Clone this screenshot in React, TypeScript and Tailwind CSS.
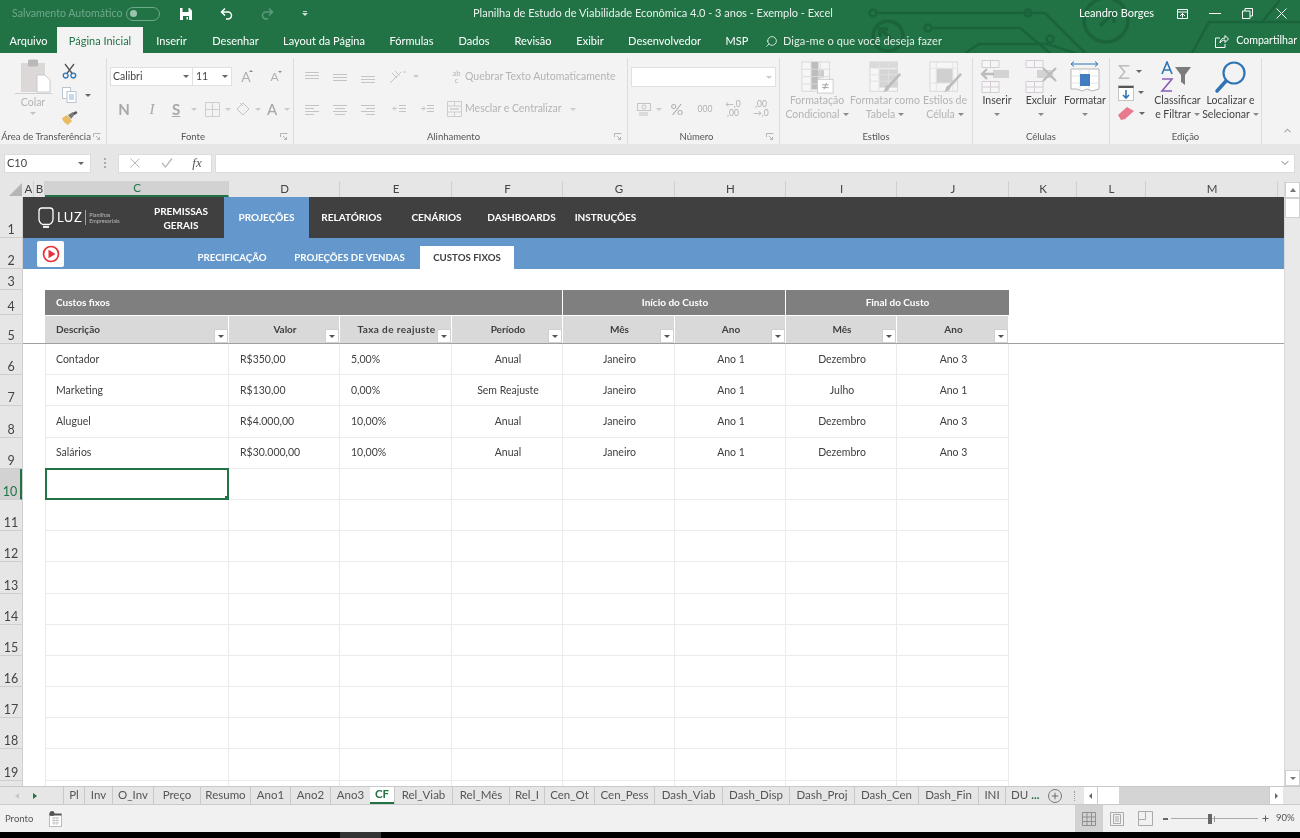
import type { ReactNode } from 'react'
import { ChevronDown, ChevronUp, Plus, Search } from 'lucide-react'

const columns = [
  { name: 'A', w: 'w-[11px]' },
  { name: 'B', w: 'w-[11px]' },
  { name: 'C', w: 'w-[184px]' },
  { name: 'D', w: 'w-[111px]' },
  { name: 'E', w: 'w-[112px]' },
  { name: 'F', w: 'w-[111px]' },
  { name: 'G', w: 'w-[112px]' },
  { name: 'H', w: 'w-[111px]' },
  { name: 'I', w: 'w-[111px]' },
  { name: 'J', w: 'w-[112px]' },
  { name: 'K', w: 'w-[68px]' },
  { name: 'L', w: 'w-[69px]' },
  { name: 'M', w: 'w-[132px]' },
]

const rowHeads = [
  { n: 1, h: 'h-[41px]' },
  { n: 2, h: 'h-[31px]' },
  { n: 3, h: 'h-[21px]' },
  { n: 4, h: 'h-[25px]' },
  { n: 5, h: 'h-[29px]' },
  ...[6, 7, 8, 9, 10, 11, 12, 13, 14, 15, 16, 17, 18, 19].map((n) => ({ n, h: 'h-[31.2px]' })),
]

const dataCols = ['w-[184px]', 'w-[111px]', 'w-[112px]', 'w-[111px]', 'w-[112px]', 'w-[111px]', 'w-[111px]', 'w-[112px]']

const headers = [
  { t: 'Descrição', align: 'pl-[11px] text-left' },
  { t: 'Valor', align: 'pl-[2px] text-center' },
  { t: 'Taxa de reajuste', align: 'pl-[2px] text-center tracking-[0.4px]' },
  { t: 'Período', align: 'pl-[2px] text-center' },
  { t: 'Mês', align: 'pl-[2px] text-center' },
  { t: 'Ano', align: 'pl-[2px] text-center' },
  { t: 'Mês', align: 'pl-[2px] text-center' },
  { t: 'Ano', align: 'pl-[2px] text-center' },
]

const costs = [
  ['Contador', 'R$350,00', '5,00%', 'Anual', 'Janeiro', 'Ano 1', 'Dezembro', 'Ano 3'],
  ['Marketing', 'R$130,00', '0,00%', 'Sem Reajuste', 'Janeiro', 'Ano 1', 'Julho', 'Ano 1'],
  ['Aluguel', 'R$4.000,00', '10,00%', 'Anual', 'Janeiro', 'Ano 1', 'Dezembro', 'Ano 3'],
  ['Salários', 'R$30.000,00', '10,00%', 'Anual', 'Janeiro', 'Ano 1', 'Dezembro', 'Ano 3'],
]

const tabs = [
  { t: 'Pl', w: 'w-[21px]' },
  { t: 'Inv', w: 'w-[28px]' },
  { t: 'O_Inv', w: 'w-[41px]' },
  { t: 'Preço', w: 'w-[47px]' },
  { t: 'Resumo', w: 'w-[50px]' },
  { t: 'Ano1', w: 'w-[40px]' },
  { t: 'Ano2', w: 'w-[40px]' },
  { t: 'Ano3', w: 'w-[40px]' },
  { t: 'CF', w: 'w-[24px]' },
  { t: 'Rel_Viab', w: 'w-[58px]' },
  { t: 'Rel_Mês', w: 'w-[57px]' },
  { t: 'Rel_I', w: 'w-[35px]' },
  { t: 'Cen_Ot', w: 'w-[50px]' },
  { t: 'Cen_Pess', w: 'w-[60px]' },
  { t: 'Dash_Viab', w: 'w-[68px]' },
  { t: 'Dash_Disp', w: 'w-[67px]' },
  { t: 'Dash_Proj', w: 'w-[65px]' },
  { t: 'Dash_Cen', w: 'w-[64px]' },
  { t: 'Dash_Fin', w: 'w-[60px]' },
  { t: 'INI', w: 'w-[27px]' },
]

const menu = [
  { t: 'Arquivo', w: 'w-[57px]' },
  { t: 'Página Inicial', w: 'w-[86px]', active: true },
  { t: 'Inserir', w: 'w-[57px]' },
  { t: 'Desenhar', w: 'w-[71px]' },
  { t: 'Layout da Página', w: 'w-[106px]' },
  { t: 'Fórmulas', w: 'w-[69px]' },
  { t: 'Dados', w: 'w-[56px]' },
  { t: 'Revisão', w: 'w-[62px]' },
  { t: 'Exibir', w: 'w-[52px]' },
  { t: 'Desenvolvedor', w: 'w-[97px]' },
  { t: 'MSP', w: 'w-[48px]' },
]

function Caret({ className = 'border-t-[#8a8a8a]' }: { className?: string }) {
  return <span className={`inline-block w-0 h-0 border-x-[3px] border-x-transparent border-t-[3px] ${className}`} />
}

function Launcher() {
  return (
    <svg width="8" height="8" viewBox="0 0 8 8" className="shrink-0" fill="none" stroke="#b5b5b5">
      <path d="M.5 4V.5H7.5" />
      <path d="M3 3l3.5 3.5M4 6.5h2.5V4" />
    </svg>
  )
}

function Group({ className, label, launcher, children }: { className: string; label: string; launcher?: boolean; children: ReactNode }) {
  return (
    <div className={`${className} h-[86px] mt-[5px] flex flex-col border-r border-[#dcdcdc] shrink-0`}>
      <div className="h-[71px] flex">{children}</div>
      <div className="h-[15px] flex items-center text-[9.5px] text-[#555] leading-none">
        <span className="flex-1 text-center whitespace-nowrap">{label}</span>
        {launcher && <span className="pr-[5px] pl-px flex"><Launcher /></span>}
      </div>
    </div>
  )
}

function Cell({ w, children }: { w: string; children: ReactNode }) {
  return <span className={`${w} h-full flex items-center justify-center shrink-0`}>{children}</span>
}

function Lines({ rows }: { rows: string[] }) {
  return (
    <svg width="14" height="12" viewBox="0 0 14 12" stroke="#c4c4c4" fill="none">
      {rows.map((d) => <path key={d} d={d} />)}
    </svg>
  )
}

function ClipboardIcon() {
  return (
    <svg width="32" height="35" viewBox="0 0 32 35" className="overflow-visible">
      <rect x="1" y="4" width="24" height="29" fill="#dcd8d8" />
      <rect x="8" y="0.5" width="10" height="7" rx="1.5" fill="#b9b9b9" />
      <path d="M17 16h8l5 5v12H17z" fill="#fff" stroke="#c9c9c9" />
      <path d="M-5 34.5h37" stroke="#cfcfcf" />
    </svg>
  )
}

function ScissorsIcon() {
  return (
    <svg width="15" height="16" viewBox="0 0 15 16" fill="none">
      <path d="M3 1l7.5 10M12 1L4.5 11" stroke="#555" strokeWidth="1.3" />
      <circle cx="3.7" cy="12.6" r="2.4" stroke="#2f75b5" strokeWidth="1.3" />
      <circle cx="11.3" cy="12.6" r="2.4" stroke="#2f75b5" strokeWidth="1.3" />
    </svg>
  )
}

function CopyIcon() {
  return (
    <svg width="15" height="16" viewBox="0 0 15 16" fill="#fff" stroke="#b9c6d2">
      <rect x="0.5" y="0.5" width="8" height="11" />
      <rect x="5" y="4.5" width="9" height="11" />
      <path d="M7 8h5M7 10h5M7 12h5" stroke="#8fb4d6" />
    </svg>
  )
}

function BrushIcon() {
  return (
    <svg width="16" height="14" viewBox="0 0 16 14">
      <path d="M0 7l5-3 5 6-4 4C4 13 1 11 0 7z" fill="#e9bc62" />
      <path d="M6 4l5-3 2 2-4 5z" fill="#7a7a7a" />
      <path d="M11 2l3-2 1.5 2-3 2z" fill="#555" />
    </svg>
  )
}

function BigGridIcon({ variant }: { variant: 'cond' | 'table' | 'cell' }) {
  return (
    <svg width="35" height="33" viewBox="0 0 38 36" fill="none">
      <rect x="2" y="1" width="30" height="32" fill="#f7f5f7" stroke="#d6d6d6" />
      {variant === 'cond' && (
        <>
          <path d="M12 1h8v30h-8z" fill="#bdbdbd" />
          <path d="M20 10h6v8h-6z" fill="#c9c9c9" />
          <path d="M2 9h30M2 17h30M2 25h30M12 1v32M22 1v32" stroke="#dcdcdc" />
          <rect x="19" y="20" width="17" height="15" fill="#fff" stroke="#c9c9c9" />
          <path d="M24 26h7M24 29h7M29 24l-3 7" stroke="#9d9d9d" />
        </>
      )}
      {variant === 'table' && (
        <>
          <path d="M2 1h30v7H2z" fill="#dadada" />
          <path d="M12 9h20v20H12z" fill="#d4d4d4" />
          <path d="M2 15h30M2 22h30M12 1v32M22 1v32" stroke="#e2e2e2" />
          <path d="M36 15L24 28l-2 4-5 2 2-6 3-2 12-13z" fill="#bcbcbc" />
        </>
      )}
      {variant === 'cell' && (
        <>
          <path d="M9 8h18v16H9z" fill="#d0d0d0" />
          <path d="M2 8h30M2 24h30M9 1v32M27 1v32" stroke="#e2e2e2" />
          <path d="M37 15L25 28l-2 4-5 2 2-6 3-2 12-13z" fill="#bcbcbc" />
        </>
      )}
    </svg>
  )
}

function CellOpIcon({ variant }: { variant: 'insert' | 'delete' }) {
  return (
    <svg width="36" height="34" viewBox="0 0 36 34" fill="none">
      <path d="M3 .5h17v7H3zM11.500 .5v7M3 21.500h17v11H3zM3 27h17M11.500 21.500v11" stroke="#d2cdd2" fill="#f7f5f7" />
      <rect x="14" y="10" width="16" height="8" fill="#d3d3d3" />
      {variant === 'insert' ? (
        <path d="M15 14H3M8 9l-5 5 5 5" stroke="#bcbcbc" strokeWidth="2.400" />
      ) : (
        <path d="M20 8l13 13M33 8L20 21" stroke="#bcbcbc" strokeWidth="2.400" />
      )}
    </svg>
  )
}

function FormatIcon() {
  return (
    <svg width="30" height="32" viewBox="0 0 30 32" fill="none">
      <path d="M1 3h27M1 3l3-2.500M1 3l3 2.500M28 3l-3-2.500M28 3l-3 2.500" stroke="#2f75b5" />
      <path d="M1 8h28v20l-7 2-5-2-5 2-5-2H1z" fill="#fff" stroke="#b5b5b5" />
      <path d="M10 8v20M19 8v20M1 15h28M1 22h28" stroke="#e4e4e4" />
      <rect x="10" y="13" width="10" height="12" fill="#3f7ebf" />
    </svg>
  )
}

function Big({ w, icon, lines, dim }: { w: string; icon: ReactNode; lines: string[]; dim?: boolean }) {
  const color = dim ? 'text-[#b4b4b4]' : 'text-[#444]'
  return (
    <div className={`${w} flex flex-col items-center shrink-0 text-[10.5px] leading-[13px] ${color}`}>
      <div className="h-[34px] mt-[2px] flex items-center justify-center">{icon}</div>
      <div className="text-center whitespace-nowrap">{lines[0]}</div>
      <div className="text-center whitespace-nowrap flex items-center justify-center gap-[3px] h-[14px]">
        {lines[1]}
        <Caret />
      </div>
    </div>
  )
}

function TitleBar() {
  return (
    <div className="h-[27px] flex items-center text-[11px] text-white">
      <span className="ml-[12px] w-[114px] text-[10.6px] text-[#6fa88b] whitespace-nowrap">Salvamento Automático</span>
      <span className="w-[34px] h-[14px] rounded-full border border-[#6fa88b] flex items-center pl-[3px]">
        <span className="w-[7px] h-[7px] rounded-full bg-[#9cc3ae]" />
      </span>
      <span className="w-[26px] ml-[13px] flex justify-center">
        <svg width="12" height="12" viewBox="0 0 12 12"><path d="M0 0h9.500L12 2.500V12H0z" fill="#fff" /><path d="M2.500 0h6v4h-6zM3 8h6v4H3z" fill="#217346" /><path d="M6.500 9h1.500v2.500H6.500z" fill="#fff" /></svg>
      </span>
      <span className="w-[24px] ml-[15px] flex justify-center">
        <svg width="13" height="13" viewBox="0 0 13 13" fill="none" stroke="#fff" strokeWidth="1.500"><path d="M5 1.500L1.500 5 5 8.500M1.500 5H8a3.500 3.500 0 0 1 0 7H6" /></svg>
      </span>
      <span className="w-[24px] ml-[17px] flex justify-center">
        <svg width="13" height="13" viewBox="0 0 13 13" fill="none" stroke="#5e9c7c" strokeWidth="1.500"><path d="M8 1.500L11.500 5 8 8.500M11.500 5H5a3.500 3.500 0 0 0 0 7h2" /></svg>
      </span>
      <span className="w-[10px] ml-[21px] flex flex-col items-center gap-[1px]">
        <span className="w-[4px] h-px bg-white/70" />
        <Caret className="border-t-white/80" />
      </span>
      <span className="ml-[163px] w-[399px] whitespace-nowrap text-[#e8f1ec]">Planilha de Estudo de Viabilidade Econômica 4.0 - 3 anos - Exemplo - Excel</span>
      <span className="ml-[207px] w-[96px] whitespace-nowrap">Leandro Borges</span>
      <span className="w-[14px] flex justify-center">
        <svg width="11" height="10" viewBox="0 0 11 10" fill="none" stroke="#fff"><path d="M.5.500h10v9H.5zM.5 3h10M3 7l2.500-2.500L8 7M5.500 4.500v4" /></svg>
      </span>
      <span className="w-[12px] ml-[20px] h-px bg-white" />
      <span className="ml-[21px] w-[11px] flex">
        <svg width="11" height="11" viewBox="0 0 11 11" fill="none" stroke="#fff"><path d="M.5 3h7.500v7.500H.5zM3 3V.5h7.500V8H8" /></svg>
      </span>
      <span className="ml-[23px]">
        <svg width="11" height="11" viewBox="0 0 11 11" fill="none" stroke="#fff" className="block"><path d="M.5.500l10 10M10.500.500l-10 10" /></svg>
      </span>
    </div>
  )
}

function MenuBar() {
  return (
    <div className="h-[26px] flex items-end text-[11px] text-white">
      {menu.map((m) => (
        <div
          key={m.t}
          className={`${m.w} h-[26px] flex items-center justify-center pt-[2px] whitespace-nowrap ${m.active ? 'bg-[#f3f3f3] text-[#217346]' : ''}`}
        >
          {m.t}
        </div>
      ))}
      <span className="ml-[4px] flex items-center gap-[5px] h-[26px] pt-[2px] text-[#e4eee8] tracking-[0.08px]">
        <Search size={13} strokeWidth={1.4} className="-scale-x-100 text-white" />
        Diga-me o que você deseja fazer
      </span>
      <span className="ml-auto flex items-center gap-[7px] h-[26px] pt-[2px] pr-[3px] text-[10.6px]">
        <svg width="14" height="13" viewBox="0 0 14 13" fill="none" stroke="#fff"><path d="M5 3H.5v9.500h9.500V9M5 8c0-3 2-5 5-5V.5l3.500 3.500L10 7.500V5C8 5 6 6 5 8z" /></svg>
        Compartilhar
      </span>
    </div>
  )
}

function Ribbon() {
  return (
    <div className="h-[91px] bg-[#f3f3f3] flex items-start relative">
      <Group className="w-[107px]" label="Área de Transferência" launcher>
        <div className="w-[66px] flex flex-col items-center text-[10.5px] text-[#b4b4b4]">
          <div className="mt-[1px] ml-[6px]"><ClipboardIcon /></div>
          <span className="mt-[2px] leading-[13px]">Colar</span>
          <span className="mt-[3px] flex"><Caret className="border-t-[#c4c4c4]" /></span>
        </div>
        <div className="flex-1 -ml-[4px] flex flex-col items-start gap-[8px] pt-[5px]">
          <ScissorsIcon />
          <span className="flex items-center gap-[8px]"><CopyIcon /><Caret className="border-t-[#666]" /></span>
          <BrushIcon />
        </div>
      </Group>

      <Group className="w-[187px]" label="Fonte" launcher>
        <div className="flex flex-col pt-[9px] gap-[14px]">
          <div className="h-[19px] flex items-center">
            <div className="ml-[3px] w-[83px] h-[19px] bg-white border border-[#e0e0e0] flex items-center justify-between pl-[2px] pr-[3px] text-[10.5px] text-[#444]">
              Calibri <Caret className="border-t-[#666]" />
            </div>
            <div className="w-[39px] h-[19px] bg-white border border-[#e0e0e0] border-l-0 flex items-center justify-between pl-[3px] pr-[3px] text-[10.5px] text-[#444]">
              11 <Caret className="border-t-[#666]" />
            </div>
            <Cell w="w-[30px]">
              <span className="flex items-start gap-px">
                <span className="text-[14px] leading-none text-[#b0b0b0]">A</span>
                <span className="w-0 h-0 -ml-[3px] border-x-[2px] border-x-transparent border-b-[2px] border-b-[#888]" />
              </span>
            </Cell>
            <Cell w="w-[28px]">
              <span className="flex items-start gap-px">
                <span className="text-[12px] leading-none text-[#b0b0b0]">A</span>
                <span className="w-0 h-0 -ml-[2px] border-x-[2px] border-x-transparent border-t-[2px] border-t-[#888]" />
              </span>
            </Cell>
          </div>
          <div className="h-[18px] flex items-center text-[#a8a8a8]">
            <Cell w="w-[34px]"><span className="text-[15px] font-bold">N</span></Cell>
            <Cell w="w-[22px]"><span className="text-[15px] italic font-[family-name:'Liberation_Serif',serif]">I</span></Cell>
            <Cell w="w-[26px]"><span className="text-[15px] font-bold underline">S</span></Cell>
            <Cell w="w-[10px]"><Caret className="border-t-[#ccc]" /></Cell>
            <Cell w="w-[26px]">
              <svg width="15" height="15" viewBox="0 0 15 15" fill="none" stroke="#d0cdd0"><path d="M.5.500h14v14H.5zM7.500.500v14M.5 7.500h14" /></svg>
            </Cell>
            <Cell w="w-[6px]"><Caret className="border-t-[#ccc]" /></Cell>
            <Cell w="w-[24px]">
              <svg width="15" height="14" viewBox="0 0 15 14" fill="none" stroke="#c4c4c4"><path d="M1 7l6-6 6 6-6 6zM4 1l3 3" /></svg>
            </Cell>
            <Cell w="w-[6px]"><Caret className="border-t-[#ccc]" /></Cell>
            <Cell w="w-[22px]"><span className="text-[15px] font-medium">A</span></Cell>
            <Cell w="w-[8px]"><Caret className="border-t-[#ccc]" /></Cell>
          </div>
        </div>
      </Group>

      <Group className="w-[334px]" label="Alinhamento" launcher>
        <div className="flex flex-col pt-[9px] gap-[14px] pl-[11px]">
          <div className="h-[19px] flex items-center">
            <Cell w="w-[14px]"><Lines rows={['M0 1.500h14', 'M0 4.500h14', 'M0 7.500h14']} /></Cell>
            <Cell w="w-[14px] ml-[14px]"><Lines rows={['M0 3.500h14', 'M0 6.500h14', 'M0 9.500h14']} /></Cell>
            <Cell w="w-[14px] ml-[14px]"><Lines rows={['M0 5.500h14', 'M0 8.500h14', 'M0 11.500h14']} /></Cell>
            <Cell w="w-[24px] ml-[12px]">
              <svg width="20" height="14" viewBox="0 0 20 14" fill="none" stroke="#c4c4c4"><path d="M1 13L12 2M3 3l5 5M6 1l5 5M14 2l3 0" /></svg>
            </Cell>
            <Cell w="w-[6px] ml-[2px]"><Caret className="border-t-[#ccc]" /></Cell>
            <span className="ml-[30px] w-[15px] text-[7.5px] leading-[7px] text-[#b4b4b4] text-center">ab<br />c</span>
            <span className="text-[10.5px] text-[#b4b4b4] whitespace-nowrap ml-[1px]">Quebrar Texto Automaticamente</span>
          </div>
          <div className="h-[18px] flex items-center">
            <Cell w="w-[14px]"><Lines rows={['M0 2.500h14', 'M0 5.500h9', 'M0 8.500h14', 'M0 11.500h9']} /></Cell>
            <Cell w="w-[14px] ml-[14px]"><Lines rows={['M0 2.500h14', 'M2 5.500h10', 'M0 8.500h14', 'M2 11.500h10']} /></Cell>
            <Cell w="w-[14px] ml-[14px]"><Lines rows={['M0 2.500h14', 'M5 5.500h9', 'M0 8.500h14', 'M5 11.500h9']} /></Cell>
            <Cell w="w-[16px] ml-[16px]"><Lines rows={['M7 2.500h7', 'M7 5.500h7', 'M7 8.500h7', 'M5 5.500L1 5.500M3 3.500L1 5.500 3 7.500']} /></Cell>
            <Cell w="w-[16px] ml-[12px]"><Lines rows={['M7 2.500h7', 'M7 5.500h7', 'M7 8.500h7', 'M1 5.500L5 5.500M3 3.500L5 5.500 3 7.500']} /></Cell>
            <Cell w="w-[16px] ml-[11px]">
              <svg width="15" height="16" viewBox="0 0 15 16" fill="none" stroke="#cfcbcf"><path d="M.5.500h14v15H.5zM.5 5h14M.5 11h14M7.500.500V5M7.500 11v4.500" /><path d="M3 8h9" stroke="#bbb" /></svg>
            </Cell>
            <span className="text-[10.5px] text-[#b4b4b4] whitespace-nowrap ml-[3px]">Mesclar e Centralizar</span>
            <span className="ml-[8px] flex"><Caret className="border-t-[#ccc]" /></span>
          </div>
        </div>
      </Group>

      <Group className="w-[152px]" label="Número" launcher>
        <div className="flex flex-col pt-[9px] gap-[14px] pl-[3px]">
          <div className="w-[145px] h-[20px] bg-white border border-[#e0e0e0] flex items-center justify-end pr-[3px]">
            <Caret className="border-t-[#ccc]" />
          </div>
          <div className="h-[18px] -mt-px flex items-center text-[#b0b0b0]">
            <Cell w="w-[22px] ml-[3px]">
              <svg width="16" height="16" viewBox="0 0 16 16" fill="none" stroke="#c4c4c4"><rect x=".5" y="2.500" width="13" height="7" /><circle cx="7" cy="6" r="2" /><path d="M2 12h9M2 14h9" /></svg>
            </Cell>
            <Cell w="w-[6px]"><Caret className="border-t-[#ccc]" /></Cell>
            <Cell w="w-[28px] ml-[1px]"><span className="text-[16px]">%</span></Cell>
            <Cell w="w-[28px]"><span className="text-[8.500px]">000</span></Cell>
            <span className="w-[28px] text-[8.500px] leading-[9px] text-center">←,0<br />,00</span>
            <span className="w-[28px] text-[8.500px] leading-[9px] text-center">,00<br />→,0</span>
          </div>
        </div>
      </Group>

      <Group className="w-[193px]" label="Estilos">
        <Big w="w-[74px]" icon={<BigGridIcon variant="cond" />} lines={['Formatação', 'Condicional']} dim />
        <Big w="w-[62px]" icon={<BigGridIcon variant="table" />} lines={['Formatar como', 'Tabela']} dim />
        <Big w="w-[58px]" icon={<BigGridIcon variant="cell" />} lines={['Estilos de', 'Célula']} dim />
      </Group>

      <Group className="w-[137px]" label="Células">
        <div className="ml-[2px] flex">
          <Big w="w-[44px]" icon={<CellOpIcon variant="insert" />} lines={['Inserir', '']} />
          <Big w="w-[44px]" icon={<CellOpIcon variant="delete" />} lines={['Excluir', '']} />
          <Big w="w-[44px]" icon={<FormatIcon />} lines={['Formatar', '']} />
        </div>
      </Group>

      <Group className="w-[152px]" label="Edição">
        <div className="w-[38px] flex flex-col pl-[8px] pt-[5px] gap-[5px]">
          <span className="flex items-center gap-[6px] h-[16px] text-[20px] text-[#bdbdbd] leading-none">Σ<Caret className="border-t-[#666]" /></span>
          <span className="flex items-center gap-[4px] h-[17px]">
            <svg width="16" height="16" viewBox="0 0 16 16" fill="none"><rect x=".5" y=".5" width="15" height="15" fill="#fff" stroke="#c4c4c4" /><path d="M.5 2h15" stroke="#555" strokeWidth="2" /><path d="M8 5v8M5 10l3 3 3-3" stroke="#2f75b5" strokeWidth="1.600" /></svg>
            <Caret className="border-t-[#666]" />
          </span>
          <span className="flex items-center gap-[5px] h-[14px]">
            <svg width="16" height="13" viewBox="0 0 16 13"><path d="M0 8l9-8 7 4-9 8-4 1z" fill="#e97a8e" /></svg>
            <Caret className="border-t-[#666]" />
          </span>
        </div>
        <Big w="w-[53px] ml-[3px]" icon={
          <svg width="36" height="32" viewBox="0 0 36 32" fill="none">
            <path d="M2 13L7 1l5 12M4 9h6" stroke="#2f75b5" strokeWidth="1.600" />
            <path d="M2 18h10L2 30h10" stroke="#8a5fb5" strokeWidth="1.600" />
            <path d="M15 6h16l-6 8v10l-4-3v-7z" fill="#7c7c7c" />
          </svg>
        } lines={['Classificar', 'e Filtrar']} />
        <Big w="w-[53px]" icon={
          <svg width="34" height="34" viewBox="0 0 34 34" fill="none">
            <circle cx="20" cy="13" r="10.500" stroke="#2f75b5" strokeWidth="2.200" />
            <path d="M12 21L3 31" stroke="#2f75b5" strokeWidth="3.500" strokeLinecap="round" />
          </svg>
        } lines={['Localizar e', 'Selecionar']} />
      </Group>

      <ChevronUp size={11} className="absolute right-[7px] bottom-[8px] text-[#777]" />
    </div>
  )
}

function FormulaBar() {
  return (
    <div className="h-[37px] bg-[#e6e6e6] flex items-center pt-[1px] text-[#444]">
      <div className="ml-[4px] w-[87px] h-[19px] bg-white border border-[#dcdcdc] flex items-center justify-between pl-[2px] pr-[6px] text-[11px]">
        C10 <Caret className="border-t-[#666]" />
      </div>
      <div className="w-[27px] flex flex-col items-center gap-[2px]">
        <span className="w-[2px] h-[2px] bg-[#aaa]" />
        <span className="w-[2px] h-[2px] bg-[#aaa]" />
        <span className="w-[2px] h-[2px] bg-[#aaa]" />
      </div>
      <div className="w-[94px] h-[19px] bg-white border border-[#dcdcdc] flex items-center">
        <Cell w="w-[32px]">
          <svg width="10" height="10" viewBox="0 0 10 10" stroke="#b8b8b8" fill="none"><path d="M.5.500l9 9M9.500.500l-9 9" /></svg>
        </Cell>
        <Cell w="w-[32px]">
          <svg width="12" height="10" viewBox="0 0 12 10" stroke="#b8b8b8" fill="none" strokeWidth="1.300"><path d="M1 5l3.500 4L11 .5" /></svg>
        </Cell>
        <span className="w-[28px] text-center text-[13px] italic font-[family-name:'Liberation_Serif',serif] text-[#555]">fx</span>
      </div>
      <div className="ml-[3px] w-[1080px] h-[19px] bg-white border border-[#dcdcdc] flex items-center justify-end pr-[3px]">
        <ChevronDown size={12} className="text-[#777]" />
      </div>
    </div>
  )
}

function FilterButton() {
  return (
    <span className="absolute right-0 bottom-0 w-[14px] h-[14px] bg-white border border-[#d0d0d0] flex items-center justify-center">
      <Caret className="border-t-[#555]" />
    </span>
  )
}

function Logo() {
  return (
    <div className="w-[115px] flex items-center pl-[15px] text-white font-normal shrink-0">
      <svg width="16" height="22" viewBox="0 0 16 22" fill="none" stroke="#fff" strokeWidth="1.300">
        <path d="M4 1h8a3 3 0 0 1 3 3v8a6 6 0 0 1-4 5.500H5A6 6 0 0 1 1 12V4a3 3 0 0 1 3-3z" />
        <path d="M5 20h6" strokeWidth="1.800" />
      </svg>
      <span className="ml-[3px] text-[13px] tracking-[0.5px] leading-none">LUZ</span>
      <span className="ml-[3px] w-px h-[15px] bg-white/50" />
      <span className="ml-[3px] text-[5.500px] leading-[6px] text-[#bbb] whitespace-nowrap">Planilhas<br />Empresariais</span>
    </div>
  )
}

function Sheet() {
  return (
    <div className="h-[605px] flex bg-[#e6e6e6] overflow-hidden">
      <div className="w-[1284px] flex flex-col">
        <div className="h-[16px] flex text-[11.500px] text-[#444] shrink-0">
          <div className="w-[23px] flex items-end justify-end pr-[1px] pb-[1px]">
            <svg width="13" height="13" viewBox="0 0 13 13"><path d="M13 0v13H0z" fill="#b5b5b5" /></svg>
          </div>
          {columns.map((c) => (
            <div
              key={c.name}
              className={`${c.w} flex items-center justify-center pl-px border-r border-[#d0d0d0] ${c.name === 'C' ? 'bg-[#d2d2d2] text-[#217346] border-b-2 border-b-[#217346]' : ''}`}
            >
              {c.name}
            </div>
          ))}
        </div>
        <div className="flex-1 flex">
          <div className="w-[23px] shrink-0 flex flex-col text-[12.500px] text-[#444] border-r border-[#d0d0d0]">
            {rowHeads.map((r) => (
              <div
                key={r.n}
                className={`${r.h} shrink-0 flex items-end justify-center leading-[14px] border-b border-[#cfcfcf] ${r.n === 10 ? 'bg-[#d2d2d2] text-[#217346] border-r-2 border-r-[#217346]' : ''}`}
              >
                {r.n}
              </div>
            ))}
          </div>
          <div className="flex-1 flex flex-col bg-white min-w-0">
            <div className="h-[41px] shrink-0 bg-[#404040] flex items-stretch text-[10px] font-bold text-white">
              <Logo />
              <div className="w-[86px] flex items-center justify-center text-center leading-[14px]">PREMISSAS<br />GERAIS</div>
              <div className="w-[85px] bg-[#6497cb] flex items-center justify-center">PROJEÇÕES</div>
              <div className="w-[85px] flex items-center justify-center">RELATÓRIOS</div>
              <div className="w-[85px] flex items-center justify-center">CENÁRIOS</div>
              <div className="w-[85px] flex items-center justify-center">DASHBOARDS</div>
              <div className="w-[83px] flex items-center justify-center">INSTRUÇÕES</div>
            </div>
            <div className="h-[31px] shrink-0 bg-[#6497cb] flex items-end text-[9.7px] font-bold text-white">
              <div className="ml-[14px] mb-[2px] w-[27px] h-[26px] bg-white rounded-[2px] flex items-center justify-center">
                <svg width="18" height="18" viewBox="0 0 18 18" fill="none">
                  <circle cx="9" cy="9" r="7.500" stroke="#e8303a" strokeWidth="1.700" />
                  <path d="M6.500 4.800l7 4.200-7 4.200z" fill="#e8303a" />
                </svg>
              </div>
              <div className="ml-[128px] w-[80px] h-[23px] flex items-center justify-center whitespace-nowrap">PRECIFICAÇÃO</div>
              <div className="ml-[15px] w-[125px] h-[23px] flex items-center justify-center whitespace-nowrap">PROJEÇÕES DE VENDAS</div>
              <div className="ml-[8px] w-[94px] h-[23px] bg-white text-[#404040] flex items-center justify-center">CUSTOS FIXOS</div>
            </div>
            <div className="h-[21px] shrink-0" />

            <div className="h-[25px] shrink-0 flex pl-[22px] text-[10px] font-bold text-white">
              <div className="w-[518px] bg-[#7f7f7f] flex items-center pl-[11px] border-r border-white">Custos fixos</div>
              <div className="w-[223px] bg-[#7f7f7f] flex items-center justify-center pl-[2px] border-r border-white">Início do Custo</div>
              <div className="w-[223px] bg-[#7f7f7f] flex items-center justify-center">Final do Custo</div>
            </div>
            <div className="h-[29px] shrink-0 flex pl-[22px] text-[10px] font-bold text-[#404040] border-b border-[#a0a0a0] -mr-[6px]">
              {headers.map((h, i) => (
                <div key={i} className={`${dataCols[i]} relative bg-[#d9d9d9] border-t border-t-white border-r border-white pt-[6px] ${h.align}`}>
                  {h.t}
                  <FilterButton />
                </div>
              ))}
            </div>

            {Array.from({ length: 15 }).map((_, r) => {
              const row = costs[r]
              return (
                <div key={r} className="h-[31.2px] shrink-0 flex pl-[22px] text-[10.500px] text-[#404040]">
                  {dataCols.map((w, i) => (
                    <div
                      key={i}
                      className={`${w} relative flex items-center pt-px border-r border-b border-[#ebebeb] ${i === 0 ? 'border-l pl-[10px] justify-start' : i < 3 ? 'pl-[11px] justify-start' : 'pl-[2px] justify-center'}`}
                    >
                      {row ? row[i] : ''}
                      {r === 4 && i === 0 && (
                        <span className="absolute -inset-px border-2 border-[#217346]">
                          <span className="absolute -right-[2px] -bottom-[2px] w-[4px] h-[4px] bg-[#217346]" />
                        </span>
                      )}
                    </div>
                  ))}
                </div>
              )
            })}
          </div>
        </div>
      </div>
      <div className="w-[16px] shrink-0 flex flex-col items-stretch bg-[#e9e9e9] border-l border-[#d8d8d8]">
        <div className="h-[16px] mt-[1px] bg-white border border-[#d0d0d0] flex items-center justify-center">
          <span className="w-0 h-0 border-x-[3px] border-x-transparent border-b-[4px] border-b-[#777]" />
        </div>
        <div className="h-[20px] bg-white border border-[#d0d0d0]" />
        <div className="flex-1" />
        <div className="h-[16px] bg-white border border-[#d0d0d0] flex items-center justify-center">
          <Caret className="border-t-[#777]" />
        </div>
      </div>
    </div>
  )
}

function TabStrip() {
  return (
    <div className="h-[19px] bg-[#e6e6e6] border-y border-[#c9c9c9] flex items-stretch text-[11.500px] leading-none text-[#555]">
      <div className="w-[63px] shrink-0 flex items-center pl-[15px] gap-[14px]">
        <span className="w-0 h-0 border-y-[3px] border-y-transparent border-r-[4px] border-r-[#c8c8c8]" />
        <span className="w-0 h-0 border-y-[3px] border-y-transparent border-l-[4px] border-l-[#217346]" />
      </div>
      {tabs.map((t) => (
        <div
          key={t.t}
          className={`${t.w} shrink-0 flex items-center justify-center pb-[2px] whitespace-nowrap ${t.t === 'CF' ? 'bg-white text-[#217346] font-bold border-b-2 border-b-[#217346]' : 'border-l border-[#c9c9c9]'}`}
        >
          {t.t}
        </div>
      ))}
      <div className="w-[40px] shrink-0 flex items-center pl-[5px] pb-[2px] gap-[3px] border-l border-[#c9c9c9] whitespace-nowrap">
        DU <span className="text-[#217346] font-bold">...</span>
      </div>
      <div className="w-[20px] shrink-0 flex items-center justify-center">
        <span className="w-[14px] h-[14px] rounded-full border border-[#777] flex items-center justify-center">
          <Plus size={10} className="text-[#555]" />
        </span>
      </div>
      <div className="w-[19px] flex items-center justify-center shrink-0">
        <span className="w-px h-[10px] border-l border-dotted border-[#999]" />
      </div>
      <div className="w-[199px] shrink-0 flex bg-[#d4d4d4]">
        <span className="w-[14px] bg-white flex items-center justify-center border-r border-[#ccc]">
          <span className="w-0 h-0 border-y-[3px] border-y-transparent border-r-[3px] border-r-[#666]" />
        </span>
        <span className="w-[21px] bg-white" />
        <span className="flex-1" />
        <span className="w-[14px] bg-white flex items-center justify-center border-l border-[#ccc]">
          <span className="w-0 h-0 border-y-[3px] border-y-transparent border-l-[3px] border-l-[#666]" />
        </span>
      </div>
    </div>
  )
}

function StatusBar() {
  return (
    <div className="h-[27px] bg-[#f1f1f1] flex items-center text-[9.500px] text-[#555]">
      <span className="ml-[5px] w-[44px] pt-[1px]">Pronto</span>
      <svg width="13" height="16" viewBox="0 0 13 16" fill="none">
        <rect x=".5" y="3.500" width="12" height="12" fill="#fff" stroke="#bbb" />
        <path d="M.5 3.500h12" stroke="#555" strokeWidth="2" />
        <circle cx="3" cy="2.500" r="2.500" fill="#555" />
        <path d="M3 7h7M3 9.500h7M3 12h7M5 6v8M8 6v8" stroke="#c8c8c8" />
      </svg>
      <div className="ml-auto flex items-center h-full">
        <span className="w-[28px] h-full bg-[#d2d2d2] flex items-center justify-center">
          <svg width="14" height="14" viewBox="0 0 14 14" fill="none" stroke="#8f8f8f"><path d="M.5.500h13v13H.5zM.5 5h13M.5 9.500h13M5 .500v13M9.500 .500v13" /></svg>
        </span>
        <span className="w-[28px] flex justify-center">
          <svg width="14" height="14" viewBox="0 0 14 14" fill="none" stroke="#aaa"><path d="M.5.500h13v13H.5zM3.500 2.500h7v9h-7zM5 5h4M5 7h4M5 9h4" /></svg>
        </span>
        <span className="w-[28px] flex justify-center">
          <svg width="15" height="15" viewBox="0 0 15 15" fill="none" stroke="#aaa"><path d="M.5.500h14v14H.5zM7.500.500v8M.5 8.500h7" /></svg>
        </span>
        <span className="ml-[4px] w-[5px] h-[2px] bg-[#666]" />
        <div className="ml-[3px] w-[87px] h-px bg-[#aaa] flex items-center">
          <span className="ml-[37px] w-[4px] h-[10px] bg-[#666]" />
          <span className="ml-[2px] w-px h-[6px] bg-[#999]" />
        </div>
        <Plus size={9} strokeWidth={2.500} className="ml-[3px] text-[#555]" />
        <span className="ml-[6px] w-[24px] text-[9.500px]">90%</span>
      </div>
    </div>
  )
}

export default function App() {
  return (
    <div className="w-[1300px] h-[838px] overflow-hidden bg-black blur-[0.35px] font-[family-name:Lato,sans-serif]">
      <div className="relative bg-[#217346]">
        <svg width="1300" height="53" viewBox="0 0 1300 53" fill="none" stroke="#1b633b" strokeWidth="2.500" className="absolute inset-0">
          <path d="M878 13h147l5 0h15l40 40M933 28h87l30 25M965 53l14-9h68l28 9M1192 53l17-31h91M1262 22l18-22" />
          <circle cx="873" cy="13" r="3.500" />
          <circle cx="928" cy="28" r="3.500" />
          <circle cx="1028" cy="13" r="3.500" />
          <circle cx="1050" cy="39" r="3.500" />
          <circle cx="888" cy="36" r="15" strokeWidth="3.500" />
          <path d="M893 41l-12-12M880 37v-8h8" strokeWidth="3.500" />
          <circle cx="1106" cy="20" r="22" strokeWidth="3.500" />
          <path d="M1100 26l13-13M1103 12h11v11" strokeWidth="3.500" />
        </svg>
        <div className="relative">
          <TitleBar />
          <MenuBar />
        </div>
      </div>
      <Ribbon />
      <FormulaBar />
      <Sheet />
      <TabStrip />
      <StatusBar />
      <div className="h-[6px] flex"><span className="ml-[340px] w-[41px] bg-[#333]" /></div>
    </div>
  )
}
